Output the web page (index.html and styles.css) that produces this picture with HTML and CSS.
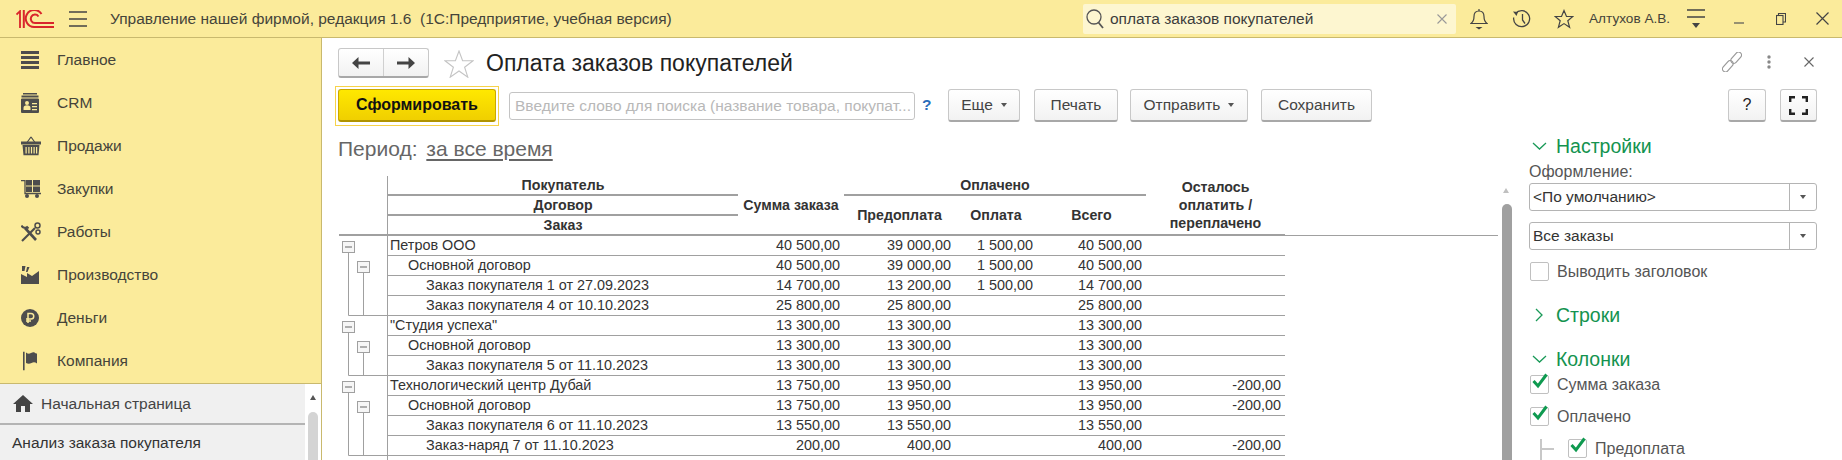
FILE: index.html
```html
<!DOCTYPE html>
<html lang="ru">
<head>
    <meta charset="utf-8">
    <meta name="viewport" content="width=device-width">
    <title>Оплата заказов покупателей</title>
    <link rel="stylesheet" href="styles.css">
</head>
<body>
    <header class="topbar">
        <svg class="logo" width="38" height="18" viewBox="0 0 38 18" fill="none" stroke="#d9252b">
            <path d="M0.500 4.500L4 1.200V18" stroke-width="1.800"/>
            <path d="M7.800 0v18" stroke-width="2"/>
            <path d="M25.500 4a8.500 8.500 0 1 0-7 13h19.500" stroke-width="2"/>
            <path d="M22.500 6.500a4.200 4.200 0 1 0-3.500 6.500h19" stroke-width="2"/>
        </svg>
        <svg class="menu-icon" width="18" height="16" viewBox="0 0 18 16" stroke="#444" stroke-width="1.300">
            <path d="M0 1h18M0 8h18M0 15h18"/>
        </svg>
        <div class="app-title">Управление нашей фирмой, редакция 1.6&nbsp; (1С:Предприятие, учебная версия)</div>
        <div class="global-search">
            <svg width="20" height="22" viewBox="0 0 20 22" fill="none" stroke="#555" stroke-width="1.300">
                <circle cx="9" cy="9" r="7"/><path d="M13.500 14.500l4.500 5.500" stroke-width="1.800"/>
            </svg>
            <span class="global-search-text">оплата заказов покупателей</span>
            <svg class="global-search-clear" width="10" height="10" viewBox="0 0 10 10" stroke="#999" stroke-width="1.100"><path d="M0.500 0.500l9 9M9.500 0.500l-9 9"/></svg>
        </div>
        <svg class="top-icon bell" width="18" height="22" viewBox="0 0 18 22" fill="none" stroke="#444" stroke-width="1.200">
            <path d="M1 15.500c2-1.500 3-3 3-7c0-3.500 2-5.500 5-5.500s5 2 5 5.500c0 4 1 5.500 3 7z"/><path d="M9 1v2"/><path d="M5.500 19h7l-3.500 2.500z" fill="#444" stroke="none"/>
        </svg>
        <svg class="top-icon history" width="20" height="20" viewBox="0 0 20 20" fill="none" stroke="#444" stroke-width="1.300">
            <path d="M3.500 4.500a8 8 0 1 1-1.800 4"/><path d="M1 2.500l5 .5-1.500 4z" fill="#444" stroke="none"/><path d="M10.500 5v6l2.500 3.500"/>
        </svg>
        <svg class="top-icon fav" width="20" height="20" viewBox="0 0 20 20" fill="none" stroke="#444" stroke-width="1.200">
            <path d="M10 1.500l2.500 6h6.300l-5 4.200 1.800 6.600-5.600-3.700-5.600 3.700 1.800-6.600-5-4.200h6.300z"/>
        </svg>
        <div class="user-name">Алтухов А.В.</div>
        <svg class="top-icon user-menu" width="18" height="20" viewBox="0 0 18 20" stroke="#444" stroke-width="1.300">
            <path d="M0 1h18M0 8h18"/><path d="M5 14h8l-4 5z" fill="#444" stroke="none"/>
        </svg>
        <svg class="top-icon win-min" width="10" height="3" viewBox="0 0 10 3" stroke="#555" stroke-width="1.200"><path d="M0 2h10"/></svg>
        <svg class="top-icon win-restore" width="10" height="12" viewBox="0 0 10 12" fill="none" stroke="#444" stroke-width="1.100"><rect x="0.500" y="2.500" width="6.500" height="9"/><path d="M2.500 2.500v-2h7v8.500h-2.500"/></svg>
        <svg class="top-icon win-close" width="13" height="13" viewBox="0 0 13 13" stroke="#444" stroke-width="1.200"><path d="M0.500 0.500l12 12M12.500 0.500l-12 12"/></svg>
    </header>

    <div class="workspace">
        <aside class="sidebar">
            <nav class="sections">
                <a class="section">
                    <svg width="18" height="18" viewBox="0 0 18 18" fill="#4d4d4d"><rect y="0" width="18" height="3"/><rect y="5" width="18" height="3"/><rect y="10" width="18" height="3"/><rect y="15" width="18" height="3"/></svg>
                    Главное
                </a>
                <a class="section">
                    <svg width="18" height="20" viewBox="0 0 18 20" fill="#4d4d4d"><path d="M2 0h14v1.500H2zM0.500 2.500h17v2H0.500z"/><path fill-rule="evenodd" d="M1 5.500h16a1 1 0 0 1 1 1V19a1 1 0 0 1-1 1H1a1 1 0 0 1-1-1V6.500a1 1 0 0 1 1-1zM6 8a2 2 0 1 0 0 4a2 2 0 0 0 0-4zM2.500 17h7v-2a2.500 2 0 0 0-7 0zM11 10v1.300h5V10zM11 13v1.300h5V13zM11 16v1.300h5V16z"/></svg>
                    CRM
                </a>
                <a class="section">
                    <svg width="20" height="19" viewBox="0 0 20 19" fill="#4d4d4d"><path d="M6 6l4-5.500 4 5.500" fill="none" stroke="#4d4d4d" stroke-width="1.200"/><rect y="5" width="20" height="3"/><path fill-rule="evenodd" d="M1.500 8.500h17l-1 10.500h-15zM4.500 10.500v6.500h1.200v-6.500zM7.300 10.500v6.500h1.200v-6.500zM9.900 10.500v6.500h1.200v-6.500zM12.500 10.500v6.500h1.200v-6.500zM15 10.500v6.500h1.200v-6.500z"/></svg>
                    Продажи
                </a>
                <a class="section">
                    <svg width="20" height="18" viewBox="0 0 20 18" fill="#4d4d4d"><path d="M0 0.500h4v13h16" fill="none" stroke="#4d4d4d" stroke-width="1.300"/><rect x="5" y="0" width="6" height="5.500"/><rect x="12" y="0" width="7" height="5.500"/><rect x="5" y="6.500" width="6" height="5.500"/><rect x="12" y="6.500" width="7" height="5.500"/><circle cx="6" cy="16" r="2"/><circle cx="16" cy="16" r="2"/></svg>
                    Закупки
                </a>
                <a class="section">
                    <svg width="20" height="20" viewBox="0 0 20 20" fill="none" stroke="#4d4d4d"><path d="M1 19L14 6" stroke-width="2.200"/><path d="M4 6l11 12" stroke-width="2.600"/><path d="M0.500 3.500c1 2 3 3 5.500 1.500l1.500 1.500" stroke-width="2"/><circle cx="16.500" cy="3.500" r="2.500" stroke-width="1.500"/><circle cx="17" cy="10" r="2" stroke-width="1.500"/></svg>
                    Работы
                </a>
                <a class="section">
                    <svg width="18" height="18" viewBox="0 0 18 18" fill="#4d4d4d"><path d="M1 0h3.500l-1 5H1zM6 1h2.500l-2 5H5zM0 18V8l6 3V7l5 3 7-5v13z"/></svg>
                    Производство
                </a>
                <a class="section">
                    <svg width="18" height="18" viewBox="0 0 18 18"><circle cx="9" cy="9" r="9" fill="#4d4d4d"/><path d="M7 14V4.500h3a2.700 2.700 0 0 1 0 5.500H5M5 12h5" fill="none" stroke="#fbeb9b" stroke-width="1.500"/></svg>
                    Деньги
                </a>
                <a class="section">
                    <svg width="18" height="19" viewBox="0 0 18 19" fill="#4d4d4d"><rect x="2" y="0" width="1.600" height="19"/><path d="M5 1c2 1.500 3 1.500 5 .5s3-1 5 .5h1v10c-2-1.500-3.500-1.500-5.500-.5s-3.500 1-5.500 0z"/></svg>
                    Компания
                </a>
            </nav>
            <div class="panel-list">
                <div class="panel-items">
                    <div class="home-row">
                        <svg width="20" height="17" viewBox="0 0 20 17" fill="#444"><path d="M10 0L0 9h3v8h5v-6h4v6h5V9h3z"/></svg>
                        Начальная страница
                    </div>
                    <div class="open-row">Анализ заказа покупателя</div>
                </div>
                <div class="panel-scroll">
                    <span class="scroll-up"></span>
                    <span class="panel-thumb"></span>
                </div>
            </div>
        </aside>

        <main class="form">
            <div class="form-head">
                <div class="nav-buttons">
                    <button class="nav-btn">
                        <svg width="18" height="12" viewBox="0 0 18 12" fill="#444"><path d="M6.500 0v4.500H18v3H6.500V12L0 6z"/></svg>
                    </button>
                    <button class="nav-btn">
                        <svg width="18" height="12" viewBox="0 0 18 12" fill="#444"><path d="M11.500 0v4.500H0v3h11.500V12L18 6z"/></svg>
                    </button>
                </div>
                <svg class="title-star" width="30" height="28" viewBox="0 0 30 28" fill="none" stroke="#c4c4c4" stroke-width="1.100">
                    <path d="M15 1l3.600 9.800h10.400l-8.400 6.400 3.200 10-8.800-6.200-8.800 6.200 3.200-10L1 10.800h10.400z"/>
                </svg>
                <h1 class="form-title">Оплата заказов покупателей</h1>
                <div class="head-icons">
                    <svg width="20" height="20" viewBox="0 0 20 20" fill="none" stroke="#999" stroke-width="1.200">
                        <rect x="-3" y="-7.500" width="6" height="13" rx="3" transform="translate(13.500 6.500) rotate(42)"/>
                        <rect x="-3" y="-5.500" width="6" height="13" rx="3" transform="translate(6.500 13.500) rotate(42)"/>
                    </svg>
                    <svg class="head-dots" width="4" height="14" viewBox="0 0 4 14" fill="#888"><circle cx="2" cy="2" r="1.700"/><circle cx="2" cy="7" r="1.700"/><circle cx="2" cy="12" r="1.700"/></svg>
                    <svg class="head-close" width="10" height="10" viewBox="0 0 10 10" stroke="#666" stroke-width="1.100"><path d="M0.500 0.500l9 9M9.500 0.500l-9 9"/></svg>
                </div>
            </div>

            <div class="toolbar">
                <div class="primary-wrap"><button class="btn-primary">Сформировать</button></div>
                <div class="report-search">Введите слово для поиска (название товара, покупат...</div>
                <span class="search-help">?</span>
                <button class="btn btn-more">Еще<i class="caret"></i></button>
                <button class="btn btn-print">Печать</button>
                <button class="btn btn-send">Отправить<i class="caret"></i></button>
                <button class="btn btn-save">Сохранить</button>
                <button class="btn btn-help">?</button>
                <button class="btn btn-full">
                    <svg width="19" height="19" viewBox="0 0 19 19" fill="none" stroke="#222" stroke-width="2.400"><path d="M1.200 6V1.200H6M13 1.200h4.800V6M1.200 13v4.800H6M13 17.800h4.800V13"/></svg>
                </button>
            </div>

            <div class="content">
                <section class="report">
                    <div class="period">Период: <span class="period-link">за все время</span></div>
                    <div class="sheet">
                        <table class="grid">
                            <colgroup>
                                <col class="c-tree"><col class="c-name"><col class="c-sum"><col class="c-pre"><col class="c-pay"><col class="c-all"><col class="c-left">
                            </colgroup>
                            <thead>
                                <tr>
                                    <th class="corner" rowspan="3"></th>
                                    <th class="thick">Покупатель</th>
                                    <th class="sum-head" rowspan="3">Сумма заказа</th>
                                    <th class="thick paid-head" colspan="3">Оплачено</th>
                                    <th class="rest-head" rowspan="3">Осталось<br>оплатить /<br>переплачено</th>
                                </tr>
                                <tr>
                                    <th class="thick">Договор</th>
                                    <th rowspan="2">Предоплата</th>
                                    <th rowspan="2">Оплата</th>
                                    <th rowspan="2">Всего</th>
                                </tr>
                                <tr>
                                    <th>Заказ</th>
                                </tr>
                            </thead>
                            <tbody>
                                <tr>
                                    <td class="tree" rowspan="4">
                                        <svg width="48" height="80" viewBox="0 0 48 80" fill="none" stroke="#a0a0a0"><path d="M9.500 16v63.500h38.500"/><path d="M24.500 36v43.500"/><rect x="3.500" y="5.500" width="12" height="11" fill="#f6f6f6"/><path d="M6 11h7" stroke="#666"/><rect x="18.500" y="25.500" width="12" height="11" fill="#f6f6f6"/><path d="M21 31h7" stroke="#666"/></svg>
                                    </td>
                                    <td class="l1">Петров ООО</td><td class="num">40 500,00</td><td class="num">39 000,00</td><td class="num">1 500,00</td><td class="num">40 500,00</td><td class="num"></td>
                                </tr>
                                <tr><td class="l2">Основной договор</td><td class="num">40 500,00</td><td class="num">39 000,00</td><td class="num">1 500,00</td><td class="num">40 500,00</td><td class="num"></td></tr>
                                <tr><td class="l3">Заказ покупателя 1 от 27.09.2023</td><td class="num">14 700,00</td><td class="num">13 200,00</td><td class="num">1 500,00</td><td class="num">14 700,00</td><td class="num"></td></tr>
                                <tr><td class="l3">Заказ покупателя 4 от 10.10.2023</td><td class="num">25 800,00</td><td class="num">25 800,00</td><td class="num"></td><td class="num">25 800,00</td><td class="num"></td></tr>
                                <tr>
                                    <td class="tree" rowspan="3">
                                        <svg width="48" height="60" viewBox="0 0 48 60" fill="none" stroke="#a0a0a0"><path d="M9.500 16v43.500h38.500"/><path d="M24.500 36v23.500"/><rect x="3.500" y="5.500" width="12" height="11" fill="#f6f6f6"/><path d="M6 11h7" stroke="#666"/><rect x="18.500" y="25.500" width="12" height="11" fill="#f6f6f6"/><path d="M21 31h7" stroke="#666"/></svg>
                                    </td>
                                    <td class="l1">"Студия успеха"</td><td class="num">13 300,00</td><td class="num">13 300,00</td><td class="num"></td><td class="num">13 300,00</td><td class="num"></td>
                                </tr>
                                <tr><td class="l2">Основной договор</td><td class="num">13 300,00</td><td class="num">13 300,00</td><td class="num"></td><td class="num">13 300,00</td><td class="num"></td></tr>
                                <tr><td class="l3">Заказ покупателя 5 от 11.10.2023</td><td class="num">13 300,00</td><td class="num">13 300,00</td><td class="num"></td><td class="num">13 300,00</td><td class="num"></td></tr>
                                <tr>
                                    <td class="tree" rowspan="4">
                                        <svg width="48" height="80" viewBox="0 0 48 80" fill="none" stroke="#a0a0a0"><path d="M9.500 16v63.500h38.500"/><path d="M24.500 36v43.500"/><rect x="3.500" y="5.500" width="12" height="11" fill="#f6f6f6"/><path d="M6 11h7" stroke="#666"/><rect x="18.500" y="25.500" width="12" height="11" fill="#f6f6f6"/><path d="M21 31h7" stroke="#666"/></svg>
                                    </td>
                                    <td class="l1">Технологический центр Дубай</td><td class="num">13 750,00</td><td class="num">13 950,00</td><td class="num"></td><td class="num">13 950,00</td><td class="num">-200,00</td>
                                </tr>
                                <tr><td class="l2">Основной договор</td><td class="num">13 750,00</td><td class="num">13 950,00</td><td class="num"></td><td class="num">13 950,00</td><td class="num">-200,00</td></tr>
                                <tr><td class="l3">Заказ покупателя 6 от 11.10.2023</td><td class="num">13 550,00</td><td class="num">13 550,00</td><td class="num"></td><td class="num">13 550,00</td><td class="num"></td></tr>
                                <tr><td class="l3">Заказ-наряд 7 от 11.10.2023</td><td class="num">200,00</td><td class="num">400,00</td><td class="num"></td><td class="num">400,00</td><td class="num">-200,00</td></tr>
                                <tr class="tail"><td></td><td class="l1"></td><td colspan="5"></td></tr>
                            </tbody>
                        </table>
                        <div class="sheet-rest"></div>
                        <div class="sheet-scroll">
                            <span class="scroll-up"></span>
                            <span class="sheet-thumb"></span>
                        </div>
                    </div>
                </section>

                <aside class="settings">
                    <h2 class="group-title">
                        <svg width="15" height="8" viewBox="0 0 15 8" fill="none" stroke="#1a9a58" stroke-width="1.300"><path d="M1 1l6.500 6L14 1"/></svg>
                        Настройки
                    </h2>
                    <div class="field-label">Оформление:</div>
                    <div class="combo"><span class="combo-value">&lt;По умолчанию&gt;</span><span class="combo-btn"><i class="caret"></i></span></div>
                    <div class="combo combo-next"><span class="combo-value">Все заказы</span><span class="combo-btn"><i class="caret"></i></span></div>
                    <label class="check check-title"><span class="box"></span>Выводить заголовок</label>
                    <h2 class="group-title rows-title">
                        <svg width="15" height="14" viewBox="0 0 15 14" fill="none" stroke="#1a9a58" stroke-width="1.300"><path d="M4 1l6 6-6 6"/></svg>
                        Строки
                    </h2>
                    <h2 class="group-title cols-title">
                        <svg width="15" height="8" viewBox="0 0 15 8" fill="none" stroke="#1a9a58" stroke-width="1.300"><path d="M1 1l6.500 6L14 1"/></svg>
                        Колонки
                    </h2>
                    <label class="check check-on"><span class="box"><svg class="tick" width="18" height="16" viewBox="0 0 18 16" fill="none" stroke="#0f9a50" stroke-width="3"><path d="M2.500 8l4.500 5L15.500 1.500"/></svg></span>Сумма заказа</label>
                    <label class="check check-on"><span class="box"><svg class="tick" width="18" height="16" viewBox="0 0 18 16" fill="none" stroke="#0f9a50" stroke-width="3"><path d="M2.500 8l4.500 5L15.500 1.500"/></svg></span>Оплачено</label>
                    <label class="check check-on check-sub">
                        <svg class="sub-line" width="15" height="22" viewBox="0 0 15 22" stroke="#c8c8c8" stroke-width="2"><path d="M1 0v22M1 10h13"/></svg>
                        <span class="box"><svg class="tick" width="18" height="16" viewBox="0 0 18 16" fill="none" stroke="#0f9a50" stroke-width="3"><path d="M2.500 8l4.500 5L15.500 1.500"/></svg></span>Предоплата
                    </label>
                </aside>
            </div>
        </main>
    </div>
</body>
</html>
```

FILE: styles.css
```css
* {
    box-sizing: border-box;
}

html, body {
    margin: 0;
    height: 460px;
    overflow: hidden;
}

body {
    font-family: "Liberation Sans", Arial, sans-serif;
    font-size: 15.5px;
    color: #333;
    background: #fff;
    display: flex;
    flex-direction: column;
}

/* top bar */
.topbar {
    flex: none;
    height: 38px;
    background: #fbeb9b;
    border-bottom: 1px solid #c9b96e;
    display: flex;
    align-items: center;
    padding-left: 16px;
}

.menu-icon {
    margin-left: 15px;
}

.app-title {
    margin-left: 23px;
    width: 973px;
    color: #45443a;
    white-space: nowrap;
}

.global-search {
    width: 373px;
    height: 30px;
    background: #fdf6d0;
    border-radius: 2px;
    display: flex;
    align-items: center;
    padding-left: 2px;
}

.global-search-text {
    margin-left: 5px;
    flex: 1;
    color: #3c3c3c;
}

.global-search-clear {
    margin-right: 9px;
}

.bell {
    margin-left: 14px;
}

.history {
    margin-left: 24px;
}

.fav {
    margin-left: 22px;
}

.user-name {
    margin-left: 15px;
    width: 98px;
    font-size: 13.6px;
    color: #45443a;
    white-space: nowrap;
}

.win-min {
    margin: 8px 0 0 29px;
}

.win-restore {
    margin-left: 32px;
}

.win-close {
    margin-left: 30px;
}

/* left panel */
.workspace {
    flex: 1;
    display: flex;
    min-height: 0;
}

.sidebar {
    flex: none;
    width: 322px;
    border-right: 1px solid #c9b96e;
    display: flex;
    flex-direction: column;
}

.sections {
    flex: none;
    height: 346px;
    background: #fbeb9b;
    border-bottom: 1px solid #c9b96e;
}

.section {
    height: 43px;
    display: flex;
    align-items: center;
    color: #45443a;
    position: relative;
    padding-left: 57px;
}

.section svg {
    position: absolute;
    left: 21px;
    top: 50%;
    transform: translateY(-50%);
}

.panel-list {
    flex: 1;
    display: flex;
    min-height: 0;
}

.panel-items {
    flex: none;
    width: 305px;
    background: #f0f0f0;
}

.home-row {
    height: 41px;
    border-bottom: 2px solid #b4b4b4;
    display: flex;
    align-items: center;
    gap: 8px;
    padding-left: 13px;
    color: #444;
}

.open-row {
    padding: 9px 0 0 12px;
    color: #333;
}

.panel-scroll {
    flex: 1;
    position: relative;
    background: #fff;
}

.scroll-up {
    position: absolute;
    left: 50%;
    top: 11px;
    margin-left: -3px;
    border-left: 3px solid transparent;
    border-right: 3px solid transparent;
    border-bottom: 5px solid #555;
}

.panel-thumb {
    position: absolute;
    left: 3px;
    top: 28px;
    width: 10px;
    height: 60px;
    border-radius: 5px;
    background: #d4d4d4;
}

/* form */
.form {
    flex: 1;
    min-width: 0;
    display: flex;
    flex-direction: column;
}

.form-head {
    flex: none;
    height: 51px;
    padding: 10px 0 0 16px;
    display: flex;
    align-items: flex-start;
}

.nav-buttons {
    display: flex;
    width: 91px;
    height: 30px;
    border: 1px solid #c8c8c8;
    border-bottom: 2px solid #a8a8a8;
    border-radius: 3px;
    background: linear-gradient(#fff, #f2f2f2);
}

.nav-btn {
    flex: 1;
    padding: 0;
    border: 0;
    background: none;
    display: flex;
    align-items: center;
    justify-content: center;
}

.nav-btn + .nav-btn {
    border-left: 1px solid #d0d0d0;
}

.title-star {
    margin: 2px 0 0 15px;
}

.form-title {
    margin: 0 0 0 12px;
    font-size: 23px;
    font-weight: 400;
    line-height: 30px;
    color: #222;
    white-space: nowrap;
}

.head-icons {
    margin-left: auto;
    margin-right: 28px;
    margin-top: 4px;
    display: flex;
    align-items: center;
}

.head-dots {
    margin-left: 25px;
}

.head-close {
    margin-left: 33px;
}

/* toolbar */
.toolbar {
    flex: none;
    height: 38px;
    padding-left: 13px;
    display: flex;
    align-items: flex-start;
}

.primary-wrap {
    width: 164px;
    height: 40px;
    margin-top: -3px;
    padding: 2px;
    border: 1px solid #f7d34a;
}

.btn-primary {
    display: block;
    width: 158px;
    height: 33px;
    padding: 0;
    border: 1px solid #c9a800;
    border-bottom: 2px solid #b09300;
    border-radius: 3px;
    background: linear-gradient(#ffe800, #f0cf00);
    font: bold 16px "Liberation Sans", Arial, sans-serif;
    color: #111;
}

.report-search {
    width: 406px;
    height: 28px;
    margin: 3px 0 0 10px;
    border: 1px solid #c4c4c4;
    border-radius: 3px;
    padding-left: 5px;
    line-height: 26px;
    color: #b8b8b8;
    white-space: nowrap;
    overflow: hidden;
}

.search-help {
    width: 33px;
    margin-top: 7px;
    padding-left: 7px;
    color: #2a6ebb;
    font-weight: 700;
}

.btn {
    height: 33px;
    padding: 0;
    border: 1px solid #c8c8c8;
    border-bottom: 2px solid #a8a8a8;
    border-radius: 3px;
    background: linear-gradient(#fff, #f2f2f2);
    font: 15.5px "Liberation Sans", Arial, sans-serif;
    color: #444;
    display: flex;
    align-items: center;
    justify-content: center;
    flex: none;
}

.caret {
    display: inline-block;
    margin-left: 8px;
    border-left: 3px solid transparent;
    border-right: 3px solid transparent;
    border-top: 4px solid #555;
}

.btn-more {
    width: 72px;
}

.btn-print {
    width: 84px;
    margin-left: 14px;
}

.btn-send {
    width: 118px;
    margin-left: 12px;
}

.btn-save {
    width: 111px;
    margin-left: 13px;
}

.btn-help {
    width: 38px;
    margin-left: 356px;
    color: #222;
    font-size: 16px;
}

.btn-full {
    width: 37px;
    margin-left: 14px;
}

/* report */
.content {
    flex: 1;
    min-height: 0;
    display: flex;
}

.report {
    flex: none;
    width: 1198px;
    padding-left: 17px;
    display: flex;
    flex-direction: column;
}

.period {
    flex: none;
    height: 49px;
    margin-left: -1px;
    padding-top: 11px;
    font-size: 21px;
    line-height: 22px;
    color: #666;
}

.period-link {
    margin-left: 3px;
    color: #666;
    text-decoration: underline;
    text-decoration-thickness: 2px;
    text-underline-offset: 3px;
}

.sheet {
    flex: 1;
    min-height: 0;
    display: flex;
    overflow: hidden;
}

.grid {
    flex: none;
    width: 946px;
    table-layout: fixed;
    border-collapse: separate;
    border-spacing: 0;
    align-self: flex-start;
}

.c-tree { width: 48px; }
.c-name { width: 351px; }
.c-sum { width: 106px; }
.c-pre { width: 111px; }
.c-pay { width: 82px; }
.c-all { width: 109px; }
.c-left { width: 139px; }

.grid th {
    height: 20px;
    padding: 0;
    font-size: 14.2px;
    line-height: 18px;
    color: #333;
    font-weight: 700;
    vertical-align: middle;
}

.grid thead tr:first-child th:nth-child(2),
.grid thead tr:nth-child(2) th:first-child,
.grid thead tr:nth-child(3) th {
    border-left: 1px solid #a0a0a0;
}

.grid th.thick,
.grid th.corner,
.grid th.sum-head,
.grid th.rest-head,
.grid th[rowspan="2"],
.grid thead tr:nth-child(3) th {
    border-bottom: 2px solid #a0a0a0;
}

.grid td {
    height: 20px;
    padding: 0 4px 0 0;
    line-height: 19px;
    font-size: 14.4px;
    color: #333;
    border-bottom: 1px solid #a0a0a0;
    white-space: nowrap;
}

.grid td.tree {
    padding: 0;
    border-bottom: 0;
    vertical-align: top;
    line-height: 0;
}

.grid td.l1,
.grid td.l2,
.grid td.l3 {
    border-left: 1px solid #a0a0a0;
}

.grid td.l1 { padding-left: 2px; }
.grid td.l2 { padding-left: 20px; }
.grid td.l3 { padding-left: 38px; }

.grid .tail td {
    border-bottom: 0;
}

.num {
    text-align: right;
}

.sheet-rest {
    flex: none;
    width: 213px;
    height: 60px;
    border-bottom: 1px solid #a0a0a0;
}

.sheet-scroll {
    flex: 1;
    position: relative;
}

.sheet-scroll .scroll-up {
    left: 5px;
    top: 12px;
    margin-left: 0;
    border-bottom-color: #c0c0c0;
}

.sheet-thumb {
    position: absolute;
    left: 4px;
    top: 28px;
    width: 10px;
    height: 260px;
    border-radius: 5px 5px 0 0;
    background: #a0a0a0;
}

/* settings */
.settings {
    flex: 1;
    min-width: 0;
    padding: 8px 25px 0 9px;
}

.group-title {
    margin: 0;
    height: 22px;
    display: flex;
    align-items: center;
    gap: 9px;
    padding-left: 3px;
    font-size: 19.5px;
    font-weight: 400;
    color: #14934f;
}

.field-label {
    margin-top: 5px;
    height: 19px;
    line-height: 19px;
    font-size: 16px;
    color: #555;
}

.combo {
    height: 28px;
    margin-top: 2px;
    border: 1px solid #b4b4b4;
    border-radius: 3px;
    display: flex;
    align-items: center;
}

.combo-next {
    margin-top: 11px;
}

.combo-value {
    flex: 1;
    padding-left: 3px;
    color: #333;
}

.combo-btn {
    width: 27px;
    height: 26px;
    border-left: 1px solid #b4b4b4;
    display: flex;
    align-items: center;
    justify-content: center;
}

.combo-btn .caret {
    margin: 0;
}

.check {
    display: flex;
    align-items: center;
    height: 19px;
    margin-left: 1px;
    font-size: 16px;
    color: #555;
}

.check-title {
    margin-top: 12px;
}

.box {
    flex: none;
    width: 19px;
    height: 19px;
    margin-right: 8px;
    border: 1px solid #c0c0c0;
    border-radius: 2px;
    background: #fff;
    position: relative;
}

.tick {
    position: absolute;
    left: 0;
    top: -3px;
}

.rows-title {
    margin-top: 23px;
}

.cols-title {
    margin-top: 22px;
}

.check-on {
    margin-top: 5px;
}

.check-on + .check-on {
    margin-top: 13px;
}

.check-sub {
    position: relative;
    padding-left: 38px;
}

.sub-line {
    position: absolute;
    left: 10px;
    top: 0;
}
```
